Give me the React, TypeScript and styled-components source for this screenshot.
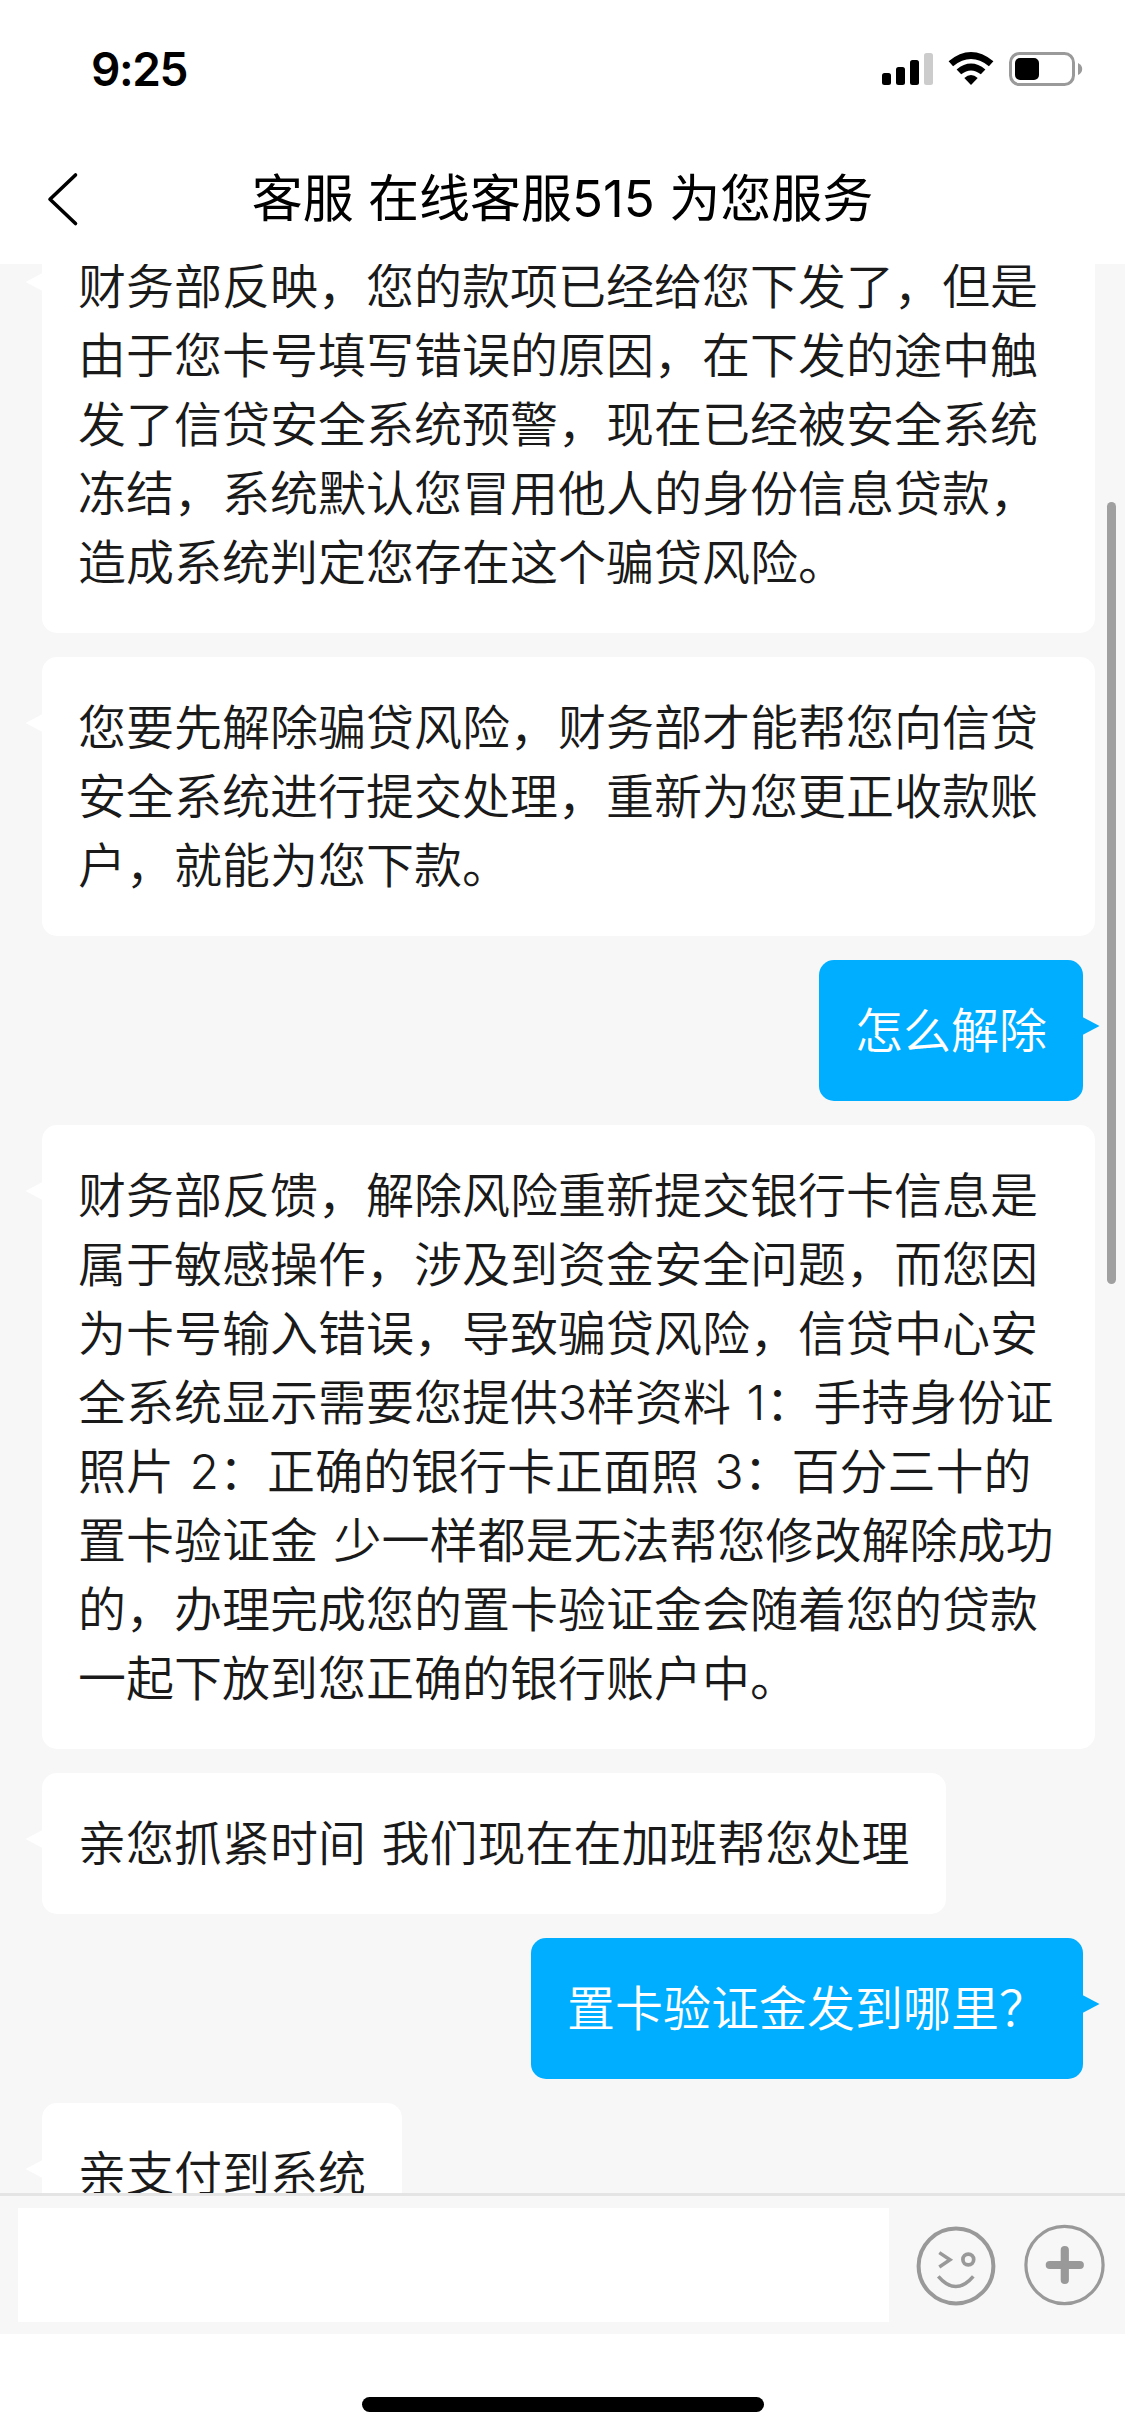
import React from 'react';
import styled, { createGlobalStyle, css } from 'styled-components';

const GlobalStyle = createGlobalStyle`
  * { box-sizing: border-box; }
  body {
    margin: 0;
    background: #ffffff;
    font-family: Inter, "Noto Sans CJK SC", sans-serif;
  }
`;

const Screen = styled.div`
  display: flex;
  flex-direction: column;
  width: 1125px;
  height: 2436px;
  overflow: hidden;
  background: #ffffff;
`;

const StatusBar = styled.div`
  display: flex;
  align-items: center;
  justify-content: space-between;
  flex: none;
  height: 138px;
  padding: 0 42px 0 91px;
`;

const Clock = styled.span`
  font-size: 46px;
  font-weight: 600;
  line-height: 60px;
  letter-spacing: -1.4px;
  color: #000000;
`;

const StatusIcons = styled.svg`
  display: block;
  width: 202px;
  height: 36px;
`;

const Header = styled.header`
  display: grid;
  grid-template-columns: 120px 1fr 120px;
  align-items: center;
  flex: none;
  height: 126px;
  padding-bottom: 4px;
`;

const BackButton = styled.button`
  display: flex;
  justify-content: flex-start;
  padding: 0 0 0 46px;
  border: 0;
  background: none;

  svg {
    display: block;
    width: 34px;
    height: 56px;
  }
`;

const Title = styled.h1`
  margin: 0;
  font-size: 51px;
  font-weight: 400;
  line-height: 72px;
  text-align: center;
  white-space: pre;
  color: #000000;
`;

const Chat = styled.main`
  position: relative;
  flex: none;
  height: 1929px;
  overflow: hidden;
  background: #f7f7f7;
`;

const MessageList = styled.div`
  display: flex;
  flex-direction: column;
  gap: 24px;
  margin-top: -48px;
  padding: 0 30px 0 42px;
`;

type Side = 'agent' | 'customer';

const Bubble = styled.div<{ $side: Side }>`
  position: relative;
  padding: 36px;
  border-radius: 15px;
  font-family: Inter, "Noto Sans CJK SC DemiLight", "Noto Sans CJK SC", sans-serif;
  font-size: 48px;
  font-weight: 350;
  line-height: 69px;
  word-spacing: 2px;

  &::before {
    content: '';
    position: absolute;
    top: 57px;
    width: 17px;
    height: 18px;
    background: inherit;
  }

  ${({ $side }) =>
    $side === 'agent'
      ? css`
          align-self: flex-start;
          background: #ffffff;
          color: #1a1a1a;
          &::before {
            left: -16.5px;
            clip-path: polygon(100% 0, 0 50%, 100% 100%);
          }
        `
      : css`
          align-self: flex-end;
          margin-right: 12px;
          background: #00aeff;
          color: #ffffff;
          &::before {
            right: -16.5px;
            clip-path: polygon(0 0, 100% 50%, 0 100%);
          }
        `}
`;

const Wide = styled(Bubble)`
  width: 1053px;
`;

const Line = styled.div`
  height: 69px;
  white-space: pre;
`;

const ScrollThumb = styled.div`
  position: absolute;
  top: 238px;
  right: 9px;
  width: 9px;
  height: 782px;
  border-radius: 5px;
  background: #a0a0a0;
`;

const Composer = styled.footer`
  display: flex;
  align-items: center;
  flex: none;
  height: 141px;
  padding: 0 20px 0 18px;
  border-top: 3px solid #e4e4e4;
  background: #f7f7f7;
`;

const MessageInput = styled.input`
  width: 871px;
  height: 114px;
  padding: 0 24px;
  border: 0;
  border-radius: 0;
  outline: none;
  background: #ffffff;
  font: inherit;
  font-size: 48px;
`;

const IconButton = styled.button<{ $gap: number }>`
  width: 82px;
  height: 82px;
  margin-left: ${({ $gap }) => $gap}px;
  padding: 0;
  border: 0;
  background: none;

  svg {
    display: block;
    width: 82px;
    height: 82px;
  }
`;

const HomeArea = styled.div`
  display: flex;
  justify-content: center;
  align-items: flex-end;
  flex: 1;
  padding-bottom: 24px;
`;

const HomeIndicator = styled.div`
  width: 402px;
  height: 15px;
  border-radius: 8px;
  background: #000000;
`;

interface Message {
  side: Side;
  wide?: boolean;
  lines: string[];
}

const messages: Message[] = [
  {
    side: 'agent',
    wide: true,
    lines: [
      '财务部反映，您的款项已经给您下发了，但是',
      '由于您卡号填写错误的原因，在下发的途中触',
      '发了信贷安全系统预警，现在已经被安全系统',
      '冻结，系统默认您冒用他人的身份信息贷款，',
      '造成系统判定您存在这个骗贷风险。',
    ],
  },
  {
    side: 'agent',
    wide: true,
    lines: [
      '您要先解除骗贷风险，财务部才能帮您向信贷',
      '安全系统进行提交处理，重新为您更正收款账',
      '户，就能为您下款。',
    ],
  },
  { side: 'customer', lines: ['怎么解除'] },
  {
    side: 'agent',
    wide: true,
    lines: [
      '财务部反馈，解除风险重新提交银行卡信息是',
      '属于敏感操作，涉及到资金安全问题，而您因',
      '为卡号输入错误，导致骗贷风险，信贷中心安',
      '全系统显示需要您提供3样资料 1：手持身份证',
      '照片 2：正确的银行卡正面照 3：百分三十的',
      '置卡验证金 少一样都是无法帮您修改解除成功',
      '的，办理完成您的置卡验证金会随着您的贷款',
      '一起下放到您正确的银行账户中。',
    ],
  },
  { side: 'agent', lines: ['亲您抓紧时间 我们现在在加班帮您处理'] },
  { side: 'customer', lines: ['置卡验证金发到哪里？'] },
  { side: 'agent', lines: ['亲支付到系统'] },
];

function MessageBubble({ side, wide, lines }: Message) {
  const Box = wide ? Wide : Bubble;
  return (
    <Box $side={side}>
      {lines.map((line) => (
        <Line key={line}>{line}</Line>
      ))}
    </Box>
  );
}

function SystemIcons() {
  return (
    <StatusIcons viewBox="881 51 202 36" aria-hidden="true">
      <rect x="882" y="73" width="9" height="12" rx="2.5" />
      <rect x="896" y="67" width="9" height="18" rx="2.5" />
      <rect x="910" y="60" width="9" height="25" rx="2.5" />
      <rect x="924" y="53" width="9" height="32" rx="2.5" fill="#cccccc" />
      <path d="M948.6 61.2 Q971 42.8 993.4 61.2 L988.9 66.2 Q971 51.9 953.1 66.2 Z" />
      <path d="M956.6 69.4 Q971 57.8 985.4 69.4 L980.8 74.2 Q971 66.6 961.2 74.2 Z" />
      <path d="M964.3 77.9 Q971 72 977.7 77.9 L971 85 Z" />
      <rect x="1010.5" y="53.5" width="63" height="31" rx="9" fill="none" stroke="#9a9a9a" strokeWidth="3" />
      <rect x="1015" y="58" width="24" height="22" rx="5" />
      <path d="M1078 63 Q1082.2 65 1082.2 69 Q1082.2 73 1078 75 Z" fill="#9a9a9a" />
    </StatusIcons>
  );
}

export default function App() {
  return (
    <>
      <GlobalStyle />
      <Screen>
        <StatusBar>
          <Clock>9:25</Clock>
          <SystemIcons />
        </StatusBar>
        <Header>
          <BackButton aria-label="返回">
            <svg viewBox="0 0 34 56" fill="none">
              <path d="M29.5 4 L4 28.3 L29.5 52.5" stroke="#000000" strokeWidth="3.6" strokeLinecap="round" strokeLinejoin="round" />
            </svg>
          </BackButton>
          <Title>客服 在线客服515 为您服务</Title>
        </Header>
        <Chat>
          <MessageList>
            {messages.map((message) => (
              <MessageBubble key={message.lines[0]} {...message} />
            ))}
          </MessageList>
          <ScrollThumb />
        </Chat>
        <Composer>
          <MessageInput aria-label="消息" />
          <IconButton $gap={26} aria-label="表情">
            <svg viewBox="915 2224 82 82" fill="none" stroke="#999999" strokeWidth="4">
              <circle cx="956" cy="2266" r="37.4" />
              <path d="M939.3 2252.6 L950 2259.8 L939.3 2267" strokeWidth="3.5" />
              <circle cx="968.3" cy="2259.5" r="5.4" strokeWidth="3.7" />
              <path d="M938.3 2276.3 Q955.8 2296.8 973.3 2276.3" strokeWidth="3.5" />
            </svg>
          </IconButton>
          <IconButton $gap={26} aria-label="更多">
            <svg viewBox="1023 2224 82 82" fill="none" stroke="#999999">
              <circle cx="1064.5" cy="2265" r="38.6" strokeWidth="3.2" />
              <path d="M1049.8 2265 H1079.8 M1064.8 2250 V2280" strokeWidth="8.2" strokeLinecap="round" />
            </svg>
          </IconButton>
        </Composer>
        <HomeArea>
          <HomeIndicator />
        </HomeArea>
      </Screen>
    </>
  );
}
